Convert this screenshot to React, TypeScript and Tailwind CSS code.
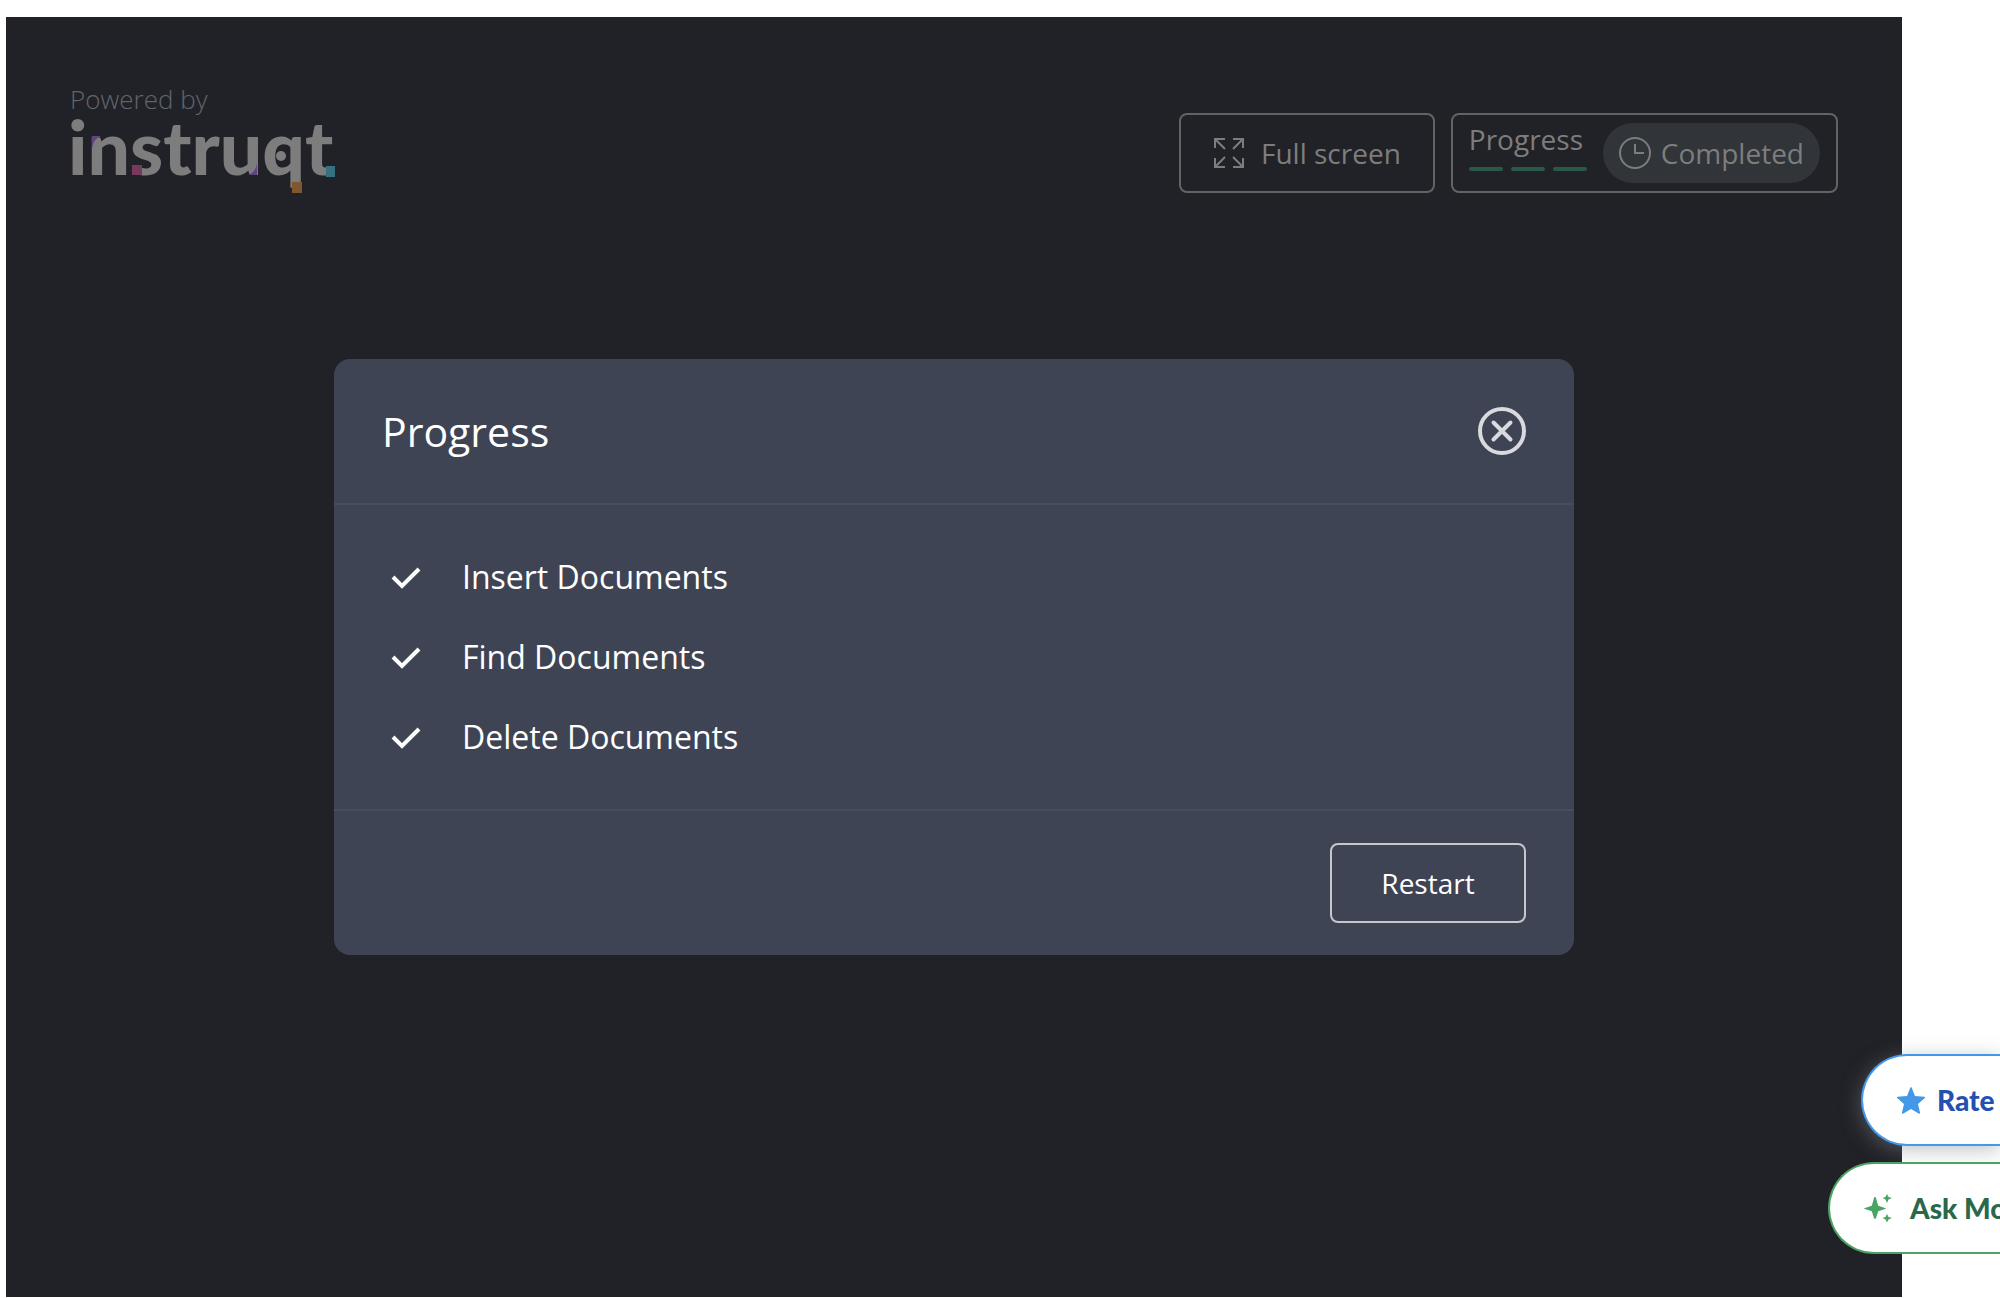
import React from "react";

function Logo() {
  return (
    <svg className="overflow-visible" width="266" height="72" viewBox="0 0 266 72" role="img" aria-label="instruqt">
      <text x="-2" y="54" fontSize="75" fontWeight="900" fontFamily="Lato, sans-serif" fill="#7d7d7d">
        instruqt
      </text>
      <path d="M22 15H31Q23 18 22 28Z" fill="#5f4480" />
      <rect x="62" y="44" width="10" height="10" fill="#763a5b" />
      <path d="M187 42V54H178Q186 51 187 42Z" fill="#5f4480" />
      <circle cx="211" cy="35" r="5" fill="#7d7d7d" />
      <rect x="222" y="61" width="10" height="11" fill="#7f562d" />
      <rect x="256" y="45" width="9" height="11" fill="#37707f" />
    </svg>
  );
}

function ExpandIcon() {
  return (
    <svg width="32" height="32" viewBox="0 0 32 32" fill="none" stroke="currentColor" strokeWidth="2" aria-hidden="true">
      <path d="M2 11V2H12M2 2L12 12M20 2H30V11M30 2L20 12M2 21V30H12M2 30L12 20M20 30H30V21M30 30L20 20" />
    </svg>
  );
}

function ClockIcon() {
  return (
    <svg width="32" height="32" viewBox="0 0 32 32" fill="none" stroke="currentColor" strokeWidth="2" aria-hidden="true">
      <circle cx="16" cy="16" r="15" />
      <path d="M16 7V16H25" />
    </svg>
  );
}

function CheckIcon() {
  return (
    <svg width="48" height="48" viewBox="0 0 48 48" fill="none" stroke="currentColor" strokeWidth="4" aria-hidden="true">
      <path d="M11 24L20 33L37 16" />
    </svg>
  );
}

function CloseIcon() {
  return (
    <svg width="48" height="48" viewBox="0 0 48 48" fill="none" stroke="currentColor" strokeWidth="4" aria-hidden="true">
      <circle cx="24" cy="24" r="22" />
      <path d="M15.500 15.500L32.500 32.500M32.500 15.500L15.500 32.500" strokeLinecap="round" />
    </svg>
  );
}

function StarIcon() {
  return (
    <svg className="shrink-0" width="28" height="27" viewBox="0 0 28 27" fill="#4398e8" aria-hidden="true">
      <path d="M13.300 0.800Q14 -0.600 14.700 0.800L18 9L27.200 9.800Q28.800 10 27.600 11.200L21 17L23 25.500Q23.200 27.200 21.600 26.500L14 22L6.400 26.500Q4.800 27.200 5 25.500L7 17L0.400 11.200Q-0.800 10 0.800 9.800L10 9Z" />
    </svg>
  );
}

function SparkleIcon() {
  return (
    <svg className="shrink-0" width="28" height="28" viewBox="0 0 28 28" fill="#49a363" aria-hidden="true">
      <path d="M11 3Q12 3 12 4L14 11Q14 12 15 12L21 14Q23 14 21 15L15 17Q14 17 14 18L12 24Q11 26 10 24L8 18Q8 17 7 17L1 15Q-1 14 1 14L7 12Q8 12 8 11L10 4Q10 3 11 3Z" />
      <path d="M23 0L24.500 3L28 4L24.500 5.500L23 9L21.500 5.500L18.500 4L21.500 3Z" />
      <path d="M23 20L24.500 23L28 24L24.500 25.500L23 28.500L21.500 25.500L18.500 24L21.500 23Z" />
    </svg>
  );
}

const tasks = ["Insert Documents", "Find Documents", "Delete Documents"];

export default function App() {
  return (
    <div className="relative flex min-h-screen overflow-hidden bg-white pt-[17px] pr-[98px] pb-px pl-[6px] font-['Open_Sans',sans-serif]">
      <main className="relative flex-1 bg-[#212227]">
        <header className="flex items-end justify-between px-16 pt-16 text-[#7d7d7d]">
          <div className="flex h-28 flex-col">
            <span className="text-[26px] leading-9 font-light text-[#5f656c]">Powered by</span>
            <div className="pt-1">
              <Logo />
            </div>
          </div>
          <div className="flex gap-4">
            <button type="button" className="flex h-20 items-center gap-4 rounded-lg border-2 border-[#626365] px-8 text-[28px] leading-10 font-medium">
              <ExpandIcon />
              Full screen
            </button>
            <button type="button" className="flex h-20 items-center gap-4 rounded-lg border-2 border-[#626365] px-4 text-[28px] leading-10 font-medium">
              <span className="flex min-w-[118px] flex-col gap-2 pb-4 text-left">
                Progress
                <span className="flex gap-2">
                  {tasks.map((task) => (
                    <span key={task} className="h-1 flex-1 rounded-full bg-[#2a5a47]" />
                  ))}
                </span>
              </span>
              <span className="flex h-[60px] items-center gap-[10px] rounded-full bg-[#313439] px-4">
                <ClockIcon />
                Completed
              </span>
            </button>
          </div>
        </header>

        <div className="absolute inset-0 flex items-center justify-center">
          <section role="dialog" aria-labelledby="progress-title" className="w-full max-w-[1240px] rounded-2xl bg-[#3f4454] text-white">
            <div className="flex h-[146px] items-center justify-between border-b-2 border-[#494e5e] px-12">
              <h1 id="progress-title" className="text-[41px] leading-none">Progress</h1>
              <button type="button" aria-label="Close" className="text-[#d9dade]">
                <CloseIcon />
              </button>
            </div>
            <ul className="px-12 py-8">
              {tasks.map((task) => (
                <li key={task} className="flex h-20 items-center gap-8 text-[32px] font-medium">
                  <CheckIcon />
                  {task}
                </li>
              ))}
            </ul>
            <div className="flex h-[146px] items-center justify-end border-t-2 border-[#494e5e] px-12">
              <button type="button" className="h-20 min-w-[196px] rounded-lg border-2 border-[#c5c7cc] text-[28px] font-medium">
                Restart
              </button>
            </div>
          </section>
        </div>
      </main>

      <div className="absolute right-0 bottom-11 flex flex-col items-end gap-4 font-['Lato',sans-serif] text-[28px] font-black whitespace-nowrap">
        <button type="button" className="flex h-[92px] w-[139px] items-center gap-3 overflow-hidden rounded-l-full border-2 border-r-0 border-[#4398e8] bg-white pl-[34px] text-[#2450b0] shadow-[0_4px_20px_rgba(130,140,145,0.5)]">
          <StarIcon />
          Rate
        </button>
        <button type="button" className="relative flex h-[92px] w-[172px] items-center gap-[18px] overflow-hidden rounded-l-full border-2 border-r-0 border-[#49a363] bg-white pl-[34px] text-[#2a684c]">
          <SparkleIcon />
          Ask MongoDB AI
        </button>
      </div>
    </div>
  );
}
